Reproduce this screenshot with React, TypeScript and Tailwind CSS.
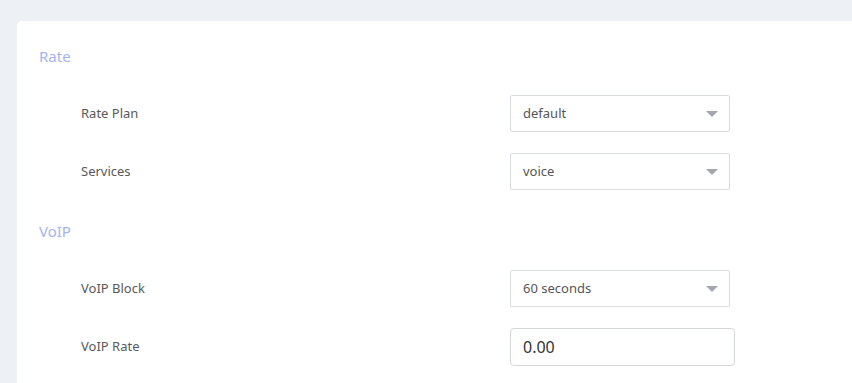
import React from 'react';

function Caret() {
  return (
    <svg width="12" height="6" viewBox="0 0 12 6" className="shrink-0">
      <path d="M0 0 L12 0 L6 6 Z" fill="#a3a6aa" />
    </svg>
  );
}

function SelectRow({ label, value, top }: { label: string; value: string; top: string }) {
  return (
    <div className={`flex items-center ${top}`}>
      <div className="w-[471px] pl-[42px] text-[13px] text-[#595959]">{label}</div>
      <div className="w-[220px] h-[37px] border border-[#d9dcde] rounded-[2px] flex items-center justify-between pl-[12px] pr-[11px] text-[13px] text-[#555]">
        <span>{value}</span>
        <Caret />
      </div>
    </div>
  );
}

export default function App() {
  return (
    <div
      className="h-[383px] w-[852px] overflow-hidden bg-[#edf1f5] pt-[21px] pl-[17px]"
      style={{ fontFamily: '"Noto Sans", sans-serif' }}
    >
      <div className="h-full bg-white rounded-tl-[5px] pl-[22px] pt-[25px]">
        <div className="h-[20px] leading-[20px] text-[15px] text-[#a5b3f3]">Rate</div>
        <SelectRow label="Rate Plan" value="default" top="mt-[29px]" />
        <SelectRow label="Services" value="voice" top="mt-[21px]" />
        <div className="mt-[31px] h-[20px] leading-[20px] text-[15px] text-[#a5b3f3]">VoIP</div>
        <SelectRow label="VoIP Block" value="60 seconds" top="mt-[29px]" />
        <div className="flex items-center mt-[21px]">
          <div className="w-[471px] pl-[42px] text-[13px] text-[#595959]">VoIP Rate</div>
          <input
            readOnly
            value="0.00"
            className="w-[225px] h-[38px] border border-[#d4d7da] rounded-[4px] px-[12px] text-[16px] text-[#333] outline-none"
          />
        </div>
      </div>
    </div>
  );
}
